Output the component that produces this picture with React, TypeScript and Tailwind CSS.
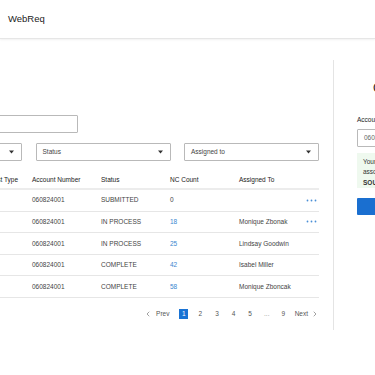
import { ChevronLeft, ChevronRight } from "lucide-react";

const rows = [
  { acct: "060824001", status: "SUBMITTED", count: "0", assigned: "", menu: true },
  { acct: "060824001", status: "IN PROCESS", count: "18", assigned: "Monique Zbonak", menu: true },
  { acct: "060824001", status: "IN PROCESS", count: "25", assigned: "Lindsay Goodwin", menu: false },
  { acct: "060824001", status: "COMPLETE", count: "42", assigned: "Isabel Miller", menu: false },
  { acct: "060824001", status: "COMPLETE", count: "58", assigned: "Monique Zboncak", menu: false },
];

function Caret() {
  return (
    <svg width="5" height="4" viewBox="0 0 5 4" className="shrink-0">
      <path d="M0 0.5h5L2.5 3.5z" fill="#333" />
    </svg>
  );
}

function Dots() {
  return (
    <svg width="11" height="3" viewBox="0 0 11 3">
      <circle cx="1.5" cy="1.5" r="0.9" fill="#4a8fd6" />
      <circle cx="5.5" cy="1.5" r="0.9" fill="#4a8fd6" />
      <circle cx="9.5" cy="1.5" r="0.9" fill="#4a8fd6" />
    </svg>
  );
}

function Select({ label }: { label: string }) {
  return (
    <div className="h-[18px] border border-[#b9b9b9] rounded-[1px] flex items-center justify-between pl-[6px] pr-[7px] text-[6.5px] text-[#444]">
      <span>{label}</span>
      <Caret />
    </div>
  );
}

export default function App() {
  const pages = ["1", "2", "3", "4", "5", "...", "9"];
  return (
    <div
      className="w-[375px] h-[375px] overflow-hidden bg-white text-[#333]"
      style={{ fontFamily: '"Liberation Sans", Arial, sans-serif' }}
    >
      {/* Header */}
      <header className="h-[39px] flex items-center pl-[8px] pt-[1px] border-b border-[#e6e6e6] shadow-[0_1px_2px_rgba(0,0,0,0.06)]">
        <span className="text-[9.5px] font-medium text-[#222]">WebReq</span>
      </header>

      <div className="flex mt-[21px] h-[270px]">
        {/* Left list */}
        <section className="w-[334px] shrink-0 border-r border-[#e4e4e4] overflow-hidden">
          <div className="-ml-[113px] w-[432px] pt-[55px]">
            <div className="w-[191px] h-[18px] border border-[#b9b9b9] rounded-[1px]" />

            <div className="grid grid-cols-3 gap-[13.5px] mt-[10px]">
              <Select label="Request Type" />
              <Select label="Status" />
              <Select label="Assigned to" />
            </div>

            <div className="ml-[91px] mt-[11px] w-[341px] text-[6.5px]">
              <div className="flex items-center h-[18px] border-b-2 border-[#ececec] text-[#222]">
                <div className="w-[54px]">Request Type</div>
                <div className="w-[69px]">Account Number</div>
                <div className="w-[69px]">Status</div>
                <div className="w-[69px]">NC Count</div>
                <div className="flex-1">Assigned To</div>
              </div>
              {rows.map((r, i) => (
                <div key={i} className="flex items-center h-[21.6px] border-b border-[#e6e6e6] text-[#444]">
                  <div className="w-[54px]" />
                  <div className="w-[69px]">{r.acct}</div>
                  <div className="w-[69px]">{r.status}</div>
                  <div className={`w-[69px] ${r.count === "0" ? "text-[#444]" : "text-[#3a86cf]"}`}>{r.count}</div>
                  <div className="w-[67px]">{r.assigned}</div>
                  <div className="flex-1 flex">{r.menu && <Dots />}</div>
                </div>
              ))}
            </div>

            <div className="flex justify-end items-center mt-[11px] text-[6.5px] text-[#555]">
              <ChevronLeft size={8} strokeWidth={1.5} className="text-[#444]" />
              <span className="ml-[4px] mr-[6px]">Prev</span>
              {pages.map((p) => (
                <div key={p} className="w-[16.6px] flex justify-center">
                  {p === "1" ? (
                    <span className="w-[9px] h-[10px] bg-[#1a73d4] text-white flex items-center justify-center">1</span>
                  ) : (
                    <span className={p === "..." ? "text-[#999]" : ""}>{p}</span>
                  )}
                </div>
              ))}
              <span className="ml-[3px]">Next</span>
              <ChevronRight size={8} strokeWidth={1.5} className="ml-[3px] text-[#444]" />
            </div>
          </div>
        </section>

        {/* Right panel */}
        <aside className="flex-1 overflow-hidden pl-[23px] pt-[22px] text-[6.5px]">
          <div className="w-[200px]">
            <div className="ml-[16px] text-[12px] text-[#222] leading-none">Create Request</div>
            <div className="mt-[21px] text-[#222]">Account Number</div>
            <div className="mt-[4px] h-[18px] border border-[#b9b9b9] rounded-[1px] flex items-center pl-[6px] text-[#666]">
              060824001
            </div>
            <div className="mt-[6px] h-[35px] bg-[#eff9ef] pl-[6px] pt-[4px] leading-[10.5px] text-[#333]">
              <div>Your account number is</div>
              <div>associated with</div>
              <div className="font-bold">SOUTHERN REGION</div>
            </div>
            <div className="mt-[10px] h-[17px] bg-[#1a6fd0] rounded-[1px]" />
          </div>
        </aside>
      </div>
    </div>
  );
}
